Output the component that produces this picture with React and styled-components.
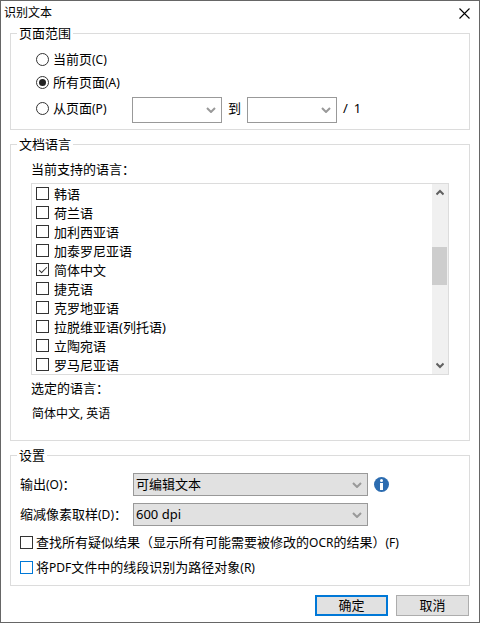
import { useState } from "react";
import styled, { createGlobalStyle } from "styled-components";

const languages = [
  "韩语",
  "荷兰语",
  "加利西亚语",
  "加泰罗尼亚语",
  "简体中文",
  "捷克语",
  "克罗地亚语",
  "拉脱维亚语(列托语)",
  "立陶宛语",
  "罗马尼亚语",
];

function Dropdown({ children, ...props }) {
  return (
    <SelectBox>
      <Select {...props}>{children}</Select>
      <Chevron viewBox="0 0 10 6" aria-hidden="true">
        <path d="M1 1l4 4 4-4" />
      </Chevron>
    </SelectBox>
  );
}

export default function App() {
  const [range, setRange] = useState("all");
  const [selected, setSelected] = useState(["简体中文"]);

  function toggleLanguage(name) {
    setSelected(
      selected.includes(name) ? selected.filter((item) => item !== name) : [...selected, name]
    );
  }

  return (
    <>
      <GlobalStyle />
      <Dialog lang="zh-CN">
        <TitleBar>
          <Title>识别文本</Title>
          <CloseButton type="button" aria-label="关闭">
            <svg width="11" height="11" viewBox="0 0 11 11">
              <path d="M0.5 0.5l10 10M10.5 0.5l-10 10" stroke="#000" strokeWidth="1.1" />
            </svg>
          </CloseButton>
        </TitleBar>

        <Group>
          <legend>页面范围</legend>
          <RangeOptions>
            <RadioLabel>
              <Radio
                name="range"
                checked={range === "current"}
                onChange={() => setRange("current")}
              />
              <span>
                当前页<Latin>(C)</Latin>
              </span>
            </RadioLabel>
            <RadioLabel>
              <Radio name="range" checked={range === "all"} onChange={() => setRange("all")} />
              <span>
                所有页面<Latin>(A)</Latin>
              </span>
            </RadioLabel>
            <PageRow>
              <RadioLabel>
                <Radio name="range" checked={range === "from"} onChange={() => setRange("from")} />
                <span>
                  从页面<Latin>(P)</Latin>
                </span>
              </RadioLabel>
              <Dropdown aria-label="起始页" />
              <label htmlFor="lastPage">到</label>
              <Dropdown id="lastPage" />
              <span>/</span>
              <span>1</span>
            </PageRow>
          </RangeOptions>
        </Group>

        <Group>
          <legend>文档语言</legend>
          <LanguageArea>
            <Caption>当前支持的语言：</Caption>
            <ListBox>
              <LanguageList>
                {languages.map((name) => (
                  <LanguageLabel key={name}>
                    <Checkbox
                      checked={selected.includes(name)}
                      onChange={() => toggleLanguage(name)}
                    />
                    {name}
                  </LanguageLabel>
                ))}
              </LanguageList>
              <ScrollBar>
                <ScrollButton type="button" aria-label="向上滚动">
                  <svg width="8" height="7" viewBox="0 0 8 7">
                    <path d="M0.5 5.5L4 2l3.5 3.5" />
                  </svg>
                </ScrollButton>
                <ScrollTrack>
                  <ScrollThumb />
                </ScrollTrack>
                <ScrollButton type="button" aria-label="向下滚动">
                  <svg width="8" height="7" viewBox="0 0 8 7">
                    <path d="M0.5 1.5L4 5l3.5-3.5" />
                  </svg>
                </ScrollButton>
              </ScrollBar>
            </ListBox>
            <Caption>选定的语言：</Caption>
            <SelectedLanguages>简体中文, 英语</SelectedLanguages>
          </LanguageArea>
        </Group>

        <Group>
          <legend>设置</legend>
          <Settings>
            <SettingRow>
              <label htmlFor="output">
                输出<Latin>(O)</Latin>：
              </label>
              <Dropdown id="output" $filled>
                <option>可编辑文本</option>
              </Dropdown>
              <InfoIcon viewBox="0 0 15 15" role="img" aria-label="信息">
                <circle cx="7.5" cy="7.5" r="7.5" fill="#2c6cb0" />
                <circle cx="7.5" cy="3.6" r="1.5" fill="#fff" />
                <path d="M6 6h3v7H6z" fill="#fff" />
              </InfoIcon>
            </SettingRow>
            <SettingRow>
              <label htmlFor="dpi">
                缩减像素取样<Latin>(D)</Latin>：
              </label>
              <Dropdown id="dpi" $filled>
                <option>600 dpi</option>
              </Dropdown>
            </SettingRow>
            <CheckList>
              <CheckLabel>
                <Checkbox />
                <span>
                  查找所有疑似结果（显示所有可能需要被修改的<Latin>OCR</Latin>的结果）
                  <Latin>(F)</Latin>
                </span>
              </CheckLabel>
              <CheckLabel>
                <Checkbox $active />
                <span>
                  将<Latin>PDF</Latin>文件中的线段识别为路径对象<Latin>(R)</Latin>
                </span>
              </CheckLabel>
            </CheckList>
          </Settings>
        </Group>

        <Footer>
          <Button type="button" $primary>
            确定
          </Button>
          <Button type="button">取消</Button>
        </Footer>
      </Dialog>
    </>
  );
}

const GlobalStyle = createGlobalStyle`
  * {
    box-sizing: border-box;
  }
  body {
    margin: 0;
    background: #fff;
    color: #000;
    font: 13px/20px "Noto Sans", "Noto Sans CJK SC", sans-serif;
  }
  svg {
    display: block;
    flex: none;
  }
`;

const Dialog = styled.main`
  border: 1px solid #666;
  padding: 0 9px 6px;
  background: #fff;
  white-space: nowrap;
`;

const TitleBar = styled.header`
  display: flex;
  align-items: center;
  justify-content: space-between;
  height: 22px;
  margin: 0 -6px;
  padding: 2px 6px 0 0;
`;

const Title = styled.h1`
  margin: 0;
  font-size: 12px;
  font-weight: normal;
`;

const CloseButton = styled.button`
  border: none;
  padding: 0;
  background: none;
`;

const Group = styled.fieldset`
  min-width: 0;
  margin: 0 0 4px;
  border: 1px solid #dcdcdc;
  padding: 0 6px;
  legend {
    padding: 0 2px;
  }
`;

const Latin = styled.span`
  font-size: 12px;
`;

const RangeOptions = styled.div`
  padding: 5px 0 6px 19px;
`;

const RadioLabel = styled.label`
  display: flex;
  align-items: center;
  gap: 4px;
  height: 23px;
`;

const Radio = styled.input.attrs({ type: "radio" })`
  appearance: none;
  flex: none;
  width: 13px;
  height: 13px;
  margin: 0;
  border: 1px solid #333;
  border-radius: 50%;
  padding: 2px;
  background: #fff;
  &:checked {
    background: #222 content-box;
  }
`;

const PageRow = styled.div`
  display: grid;
  grid-template-columns: 90px 90px auto 90px auto auto;
  justify-content: start;
  gap: 6px;
  height: 26px;
  margin-top: 3px;
  line-height: 23px;
`;

const SelectBox = styled.div`
  display: grid;
  align-items: center;
  height: 100%;
`;

const Select = styled.select`
  appearance: none;
  grid-area: 1 / 1;
  width: 100%;
  height: 100%;
  border: 1px solid #999;
  border-radius: 0;
  padding: 0 20px 1px 2px;
  background: ${({ $filled }) => ($filled ? "#e1e1e1" : "#fff")};
  color: #000;
  font: inherit;
`;

const Chevron = styled.svg`
  grid-area: 1 / 1;
  justify-self: end;
  width: 10px;
  height: 6px;
  margin-right: 6px;
  fill: none;
  stroke: #999;
  stroke-width: 2;
  pointer-events: none;
`;

const LanguageArea = styled.div`
  padding: 5px 14px 16px;
`;

const Caption = styled.div`
  line-height: 20px;
`;

const ListBox = styled.div`
  display: flex;
  margin: 4px 0 3px;
  border: 1px solid #dcdcdc;
`;

const LanguageList = styled.div`
  flex: 1;
  padding-left: 4px;
`;

const LanguageLabel = styled.label`
  display: flex;
  align-items: center;
  gap: 5px;
  height: 19px;
  line-height: 18px;
`;

const Checkbox = styled.input.attrs({ type: "checkbox" })`
  appearance: none;
  display: grid;
  place-items: center;
  flex: none;
  width: 13px;
  height: 13px;
  margin: 0;
  border: 1px solid ${({ $active }) => ($active ? "#0078d7" : "#333")};
  background: #fff;
  &:checked::before {
    content: "";
    width: 7px;
    height: 3px;
    border: solid #333;
    border-width: 0 0 1px 1px;
    transform: translateY(-1px) rotate(-45deg);
  }
`;

const ScrollBar = styled.div`
  display: flex;
  flex-direction: column;
  width: 16px;
  padding-right: 1px;
  background: #f0f0f0;
`;

const ScrollButton = styled.button`
  display: grid;
  place-items: center;
  height: 17px;
  border: none;
  padding: 0;
  background: none;
  path {
    fill: none;
    stroke: #606060;
    stroke-width: 2;
  }
`;

const ScrollTrack = styled.div`
  flex: 1;
  padding-top: 46px;
`;

const ScrollThumb = styled.div`
  height: 38px;
  background: #cdcdcd;
`;

const SelectedLanguages = styled.div`
  margin-top: 6px;
  padding-left: 1px;
  font-size: 12px;
`;

const Settings = styled.div`
  display: grid;
  gap: 7px;
  padding: 8px 3px 5px;
`;

const SettingRow = styled.div`
  display: grid;
  grid-template-columns: 107px 235px auto;
  justify-content: start;
  align-items: center;
  column-gap: 6px;
  height: 23px;
`;

const InfoIcon = styled.svg`
  width: 15px;
  height: 15px;
`;

const CheckList = styled.div`
  margin-top: -3px;
`;

const CheckLabel = styled.label`
  display: flex;
  align-items: center;
  gap: 3px;
  height: 25px;
`;

const Footer = styled.footer`
  display: flex;
  justify-content: flex-end;
  gap: 8px;
  padding: 5px 1px 0 0;
`;

const Button = styled.button`
  width: 73px;
  height: 21px;
  border: ${({ $primary }) => ($primary ? "2px solid #0078d7" : "1px solid #adadad")};
  padding: 0;
  background: #e1e1e1;
  color: #000;
  font: inherit;
  line-height: 1;
`;
